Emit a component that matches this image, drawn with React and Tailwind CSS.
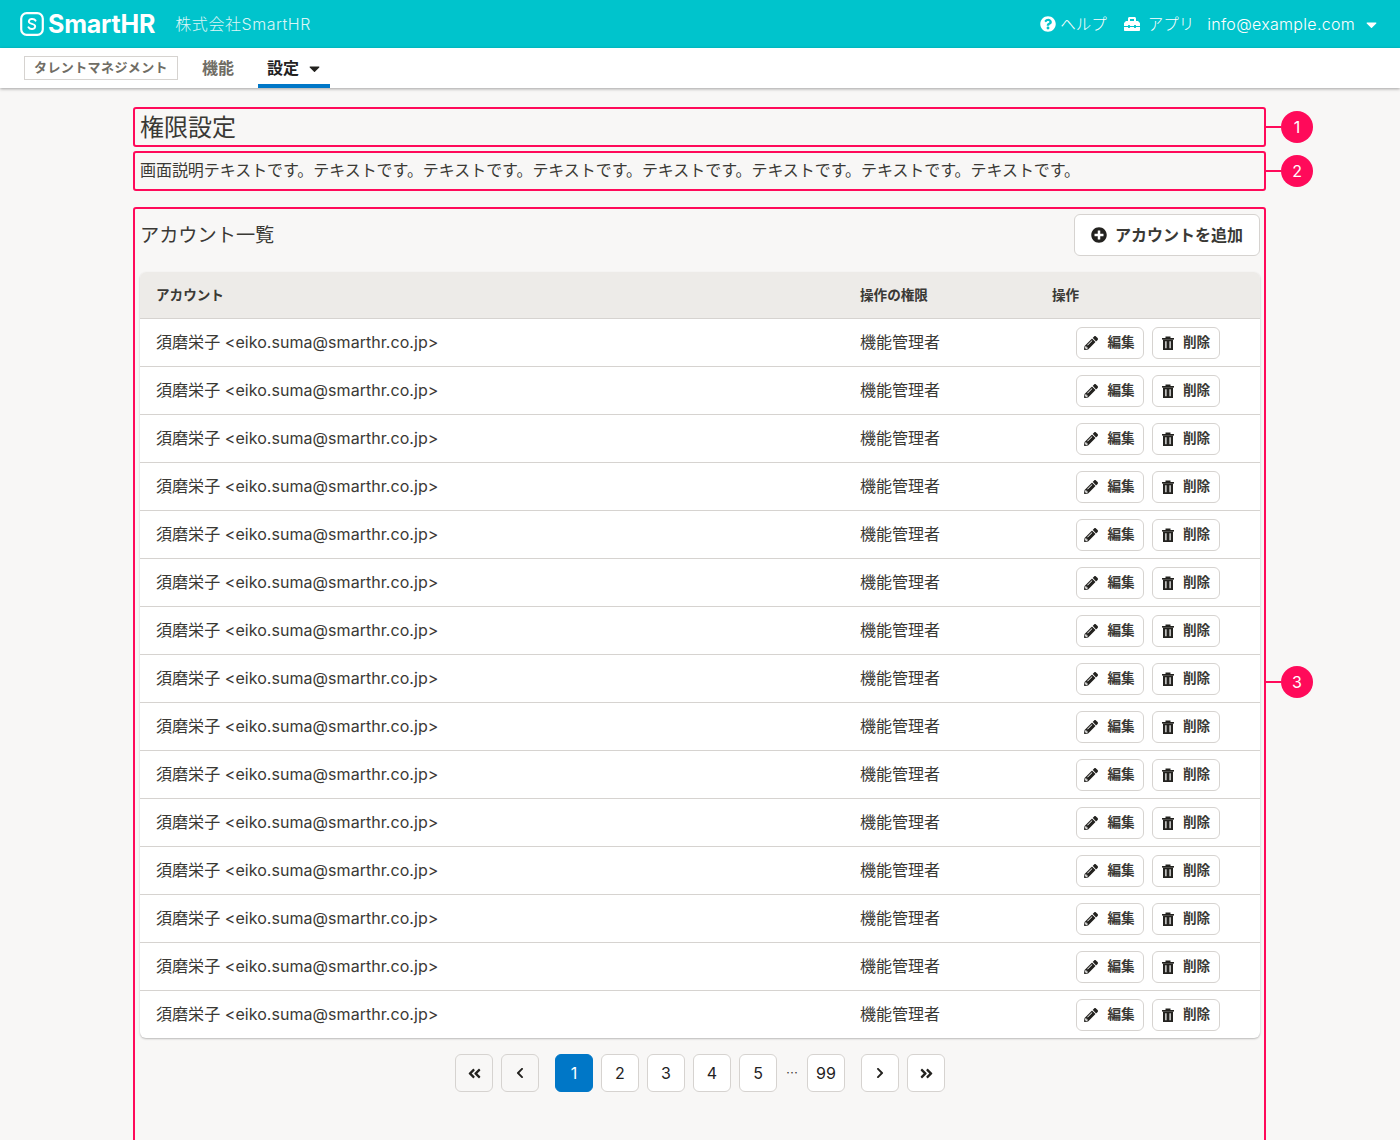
import React from "react";
import {
  FaQuestionCircle,
  FaToolbox,
  FaCaretDown,
  FaPlusCircle,
  FaPencilAlt,
  FaAngleDoubleLeft,
  FaAngleDoubleRight,
  FaChevronLeft,
  FaChevronRight,
} from "react-icons/fa";

const rows = Array.from({ length: 15 }, (_, i) => i);

function TrashIcon() {
  return (
    <svg width="12" height="14" viewBox="0 0 12 14" fill="#23221f">
      <rect x="3.5" y="0.5" width="5" height="1.5" />
      <rect x="0" y="2" width="12" height="1.6" />
      <path d="M1 3.6h10V14H1z M3.3 5.2v7h1.2v-7z M7.5 5.2v7h1.2v-7z" fillRule="evenodd" />
    </svg>
  );
}

function Note({ n }) {
  return (
    <div className="absolute left-full top-1/2 -translate-y-1/2 ml-[1px] flex items-center">
      <div className="w-4 h-[2px] bg-[#ff0a5a]" />
      <div className="w-8 h-8 rounded-full bg-[#ff0a5a] text-white text-base flex items-center justify-center">
        {n}
      </div>
    </div>
  );
}

function SmallButton({ icon, label }) {
  return (
    <button className="w-[68px] h-8 bg-white border border-[#d6d3d0] rounded-md flex items-center justify-center gap-[9px] text-[13.6px] font-bold text-[#3a3935]">
      {icon}
      <span>{label}</span>
    </button>
  );
}

function PageButton({ children, active, muted }) {
  return (
    <button
      className={
        "w-[38px] h-[38px] rounded-md flex items-center justify-center text-base border " +
        (active
          ? "bg-[#0077c7] border-[#0077c7] text-white"
          : muted
          ? "bg-[#f8f7f6] border-[#d6d3d0] text-[#23221f]"
          : "bg-white border-[#d6d3d0] text-[#23221f]")
      }
    >
      {children}
    </button>
  );
}

export default function App() {
  return (
    <div
      className="h-[1140px] overflow-hidden bg-[#f8f7f6] text-[#3a3935]"
      style={{ fontFamily: '"Inter", "Noto Sans CJK JP", sans-serif' }}
    >
      {/* header */}
      <header className="h-12 bg-[#00c4cc] text-white flex items-center justify-between pl-5 pr-5">
        <div className="flex items-center">
          <svg width="24" height="24" viewBox="0 0 24 24" fill="none" stroke="white">
            <rect x="1.2" y="1.2" width="21.6" height="21.6" rx="5.5" strokeWidth="2.2" />
            <path
              d="M15.5 8.6 C14.6 7 12.8 6.8 11.4 7 C9.4 7.3 8.4 8.9 9.1 10.4 C9.9 12 14 11.8 14.9 13.5 C15.7 15.2 14.4 16.8 12.4 17 C10.8 17.2 9.3 16.6 8.5 15.3"
              strokeWidth="2"
              strokeLinecap="round"
            />
          </svg>
          <span className="ml-[4px] text-[25px] font-bold leading-none tracking-[-0.2px]">SmartHR</span>
          <span className="ml-5 text-base font-light opacity-85 tracking-[0.55px]">株式会社SmartHR</span>
        </div>
        <div className="flex items-center text-base font-light">
          <FaQuestionCircle className="w-4 h-4" />
          <span className="ml-[4px] text-[15.5px] pt-[2px]">ヘルプ</span>
          <FaToolbox className="ml-[17px] w-4 h-4" />
          <span className="ml-2 text-[15.5px] pt-[2px]">アプリ</span>
          <span className="ml-[13px] tracking-[0.3px]">info@example.com</span>
          <FaCaretDown className="ml-2 w-[17px] h-[17px]" />
        </div>
      </header>

      {/* nav */}
      <nav className="h-10 bg-white shadow-[0_1px_3px_rgba(0,0,0,0.35)] flex items-stretch pl-6 relative">
        <div className="self-center h-6 -mt-[1px] px-[9px] border border-[#d6d3d0] flex items-center text-[13px] font-bold text-[#706d65] tracking-[0.4px]">
          タレントマネジメント
        </div>
        <div className="ml-6 flex items-center text-base font-bold text-[#706d65] -mt-[1px]">機能</div>
        <div className="ml-6 w-[72px] pl-[9px] pt-1 border-b-4 border-[#0077c7] flex items-center text-base font-bold text-[#23221f]">
          設定
          <FaCaretDown className="ml-[7px] w-[17px] h-[17px]" />
        </div>
      </nav>

      {/* content */}
      <main className="w-[1133px] ml-[133px] pt-[19px]">
        <div className="relative h-10 border-2 border-[#ff0a5a] rounded-[3px] px-[5px] pt-[2px] flex items-center text-2xl">
          権限設定
          <Note n="1" />
        </div>
        <div className="relative mt-1 h-10 border-2 border-[#ff0a5a] rounded-[3px] px-[5px] pb-[2px] flex items-center text-base whitespace-nowrap tracking-[-0.055px]">
          画面説明テキストです。テキストです。テキストです。テキストです。テキストです。テキストです。テキストです。テキストです。
          <Note n="2" />
        </div>
        <section className="relative mt-4 h-[950px] border-2 border-[#ff0a5a] rounded-[3px] pt-[5px] px-[5px]">
          <Note n="3" />
          <div className="flex items-center justify-between h-[42px] w-[1120px]">
            <h2 className="text-[19.2px] font-normal">アカウント一覧</h2>
            <button className="w-[186px] h-[42px] bg-white border border-[#d6d3d0] rounded-md flex items-center justify-center gap-2 text-base font-bold">
              <FaPlusCircle className="w-4 h-4 text-[#23221f]" />
              アカウントを追加
            </button>
          </div>

          <div className="mt-4 w-[1120px] bg-white rounded-md shadow-[0_1px_2px_rgba(0,0,0,0.25)] overflow-hidden">
            <div className="h-[47px] bg-[#edebe8] border-b border-[#d6d3d0] flex items-center text-[13.6px] font-bold">
              <div className="w-[720px] pl-4">アカウント</div>
              <div className="w-[192px]">操作の権限</div>
              <div>操作</div>
            </div>
            {rows.map((i) => (
              <div
                key={i}
                className="h-12 flex items-center text-base border-b border-[#d6d3d0] last:border-b-0 last:h-[47px]"
              >
                <div className="w-[720px] pl-4 pb-[2px] tracking-[0.05px]">{"須磨栄子 <eiko.suma@smarthr.co.jp>"}</div>
                <div className="w-[216px] pb-[2px]">機能管理者</div>
                <div className="flex gap-2">
                  <SmallButton icon={<FaPencilAlt className="w-[14px] h-[14px] -ml-[1px] text-[#23221f]" />} label="編集" />
                  <SmallButton icon={<TrashIcon />} label="削除" />
                </div>
              </div>
            ))}
          </div>

          {/* pagination */}
          <div className="mt-4 w-[1120px] flex items-center justify-center">
            <PageButton muted>
              <FaAngleDoubleLeft className="w-[15px] h-[15px]" />
            </PageButton>
            <div className="ml-2">
              <PageButton muted>
                <FaChevronLeft className="w-3 h-3" />
              </PageButton>
            </div>
            <div className="ml-4 flex items-center gap-2">
              <PageButton active>1</PageButton>
              <PageButton>2</PageButton>
              <PageButton>3</PageButton>
              <PageButton>4</PageButton>
              <PageButton>5</PageButton>
              <span className="w-[14px] flex justify-center text-xs font-['Noto_Sans_CJK_JP']">…</span>
              <PageButton>99</PageButton>
            </div>
            <div className="ml-4">
              <PageButton>
                <FaChevronRight className="w-3 h-3" />
              </PageButton>
            </div>
            <div className="ml-2">
              <PageButton>
                <FaAngleDoubleRight className="w-[15px] h-[15px]" />
              </PageButton>
            </div>
          </div>
        </section>
      </main>
    </div>
  );
}
